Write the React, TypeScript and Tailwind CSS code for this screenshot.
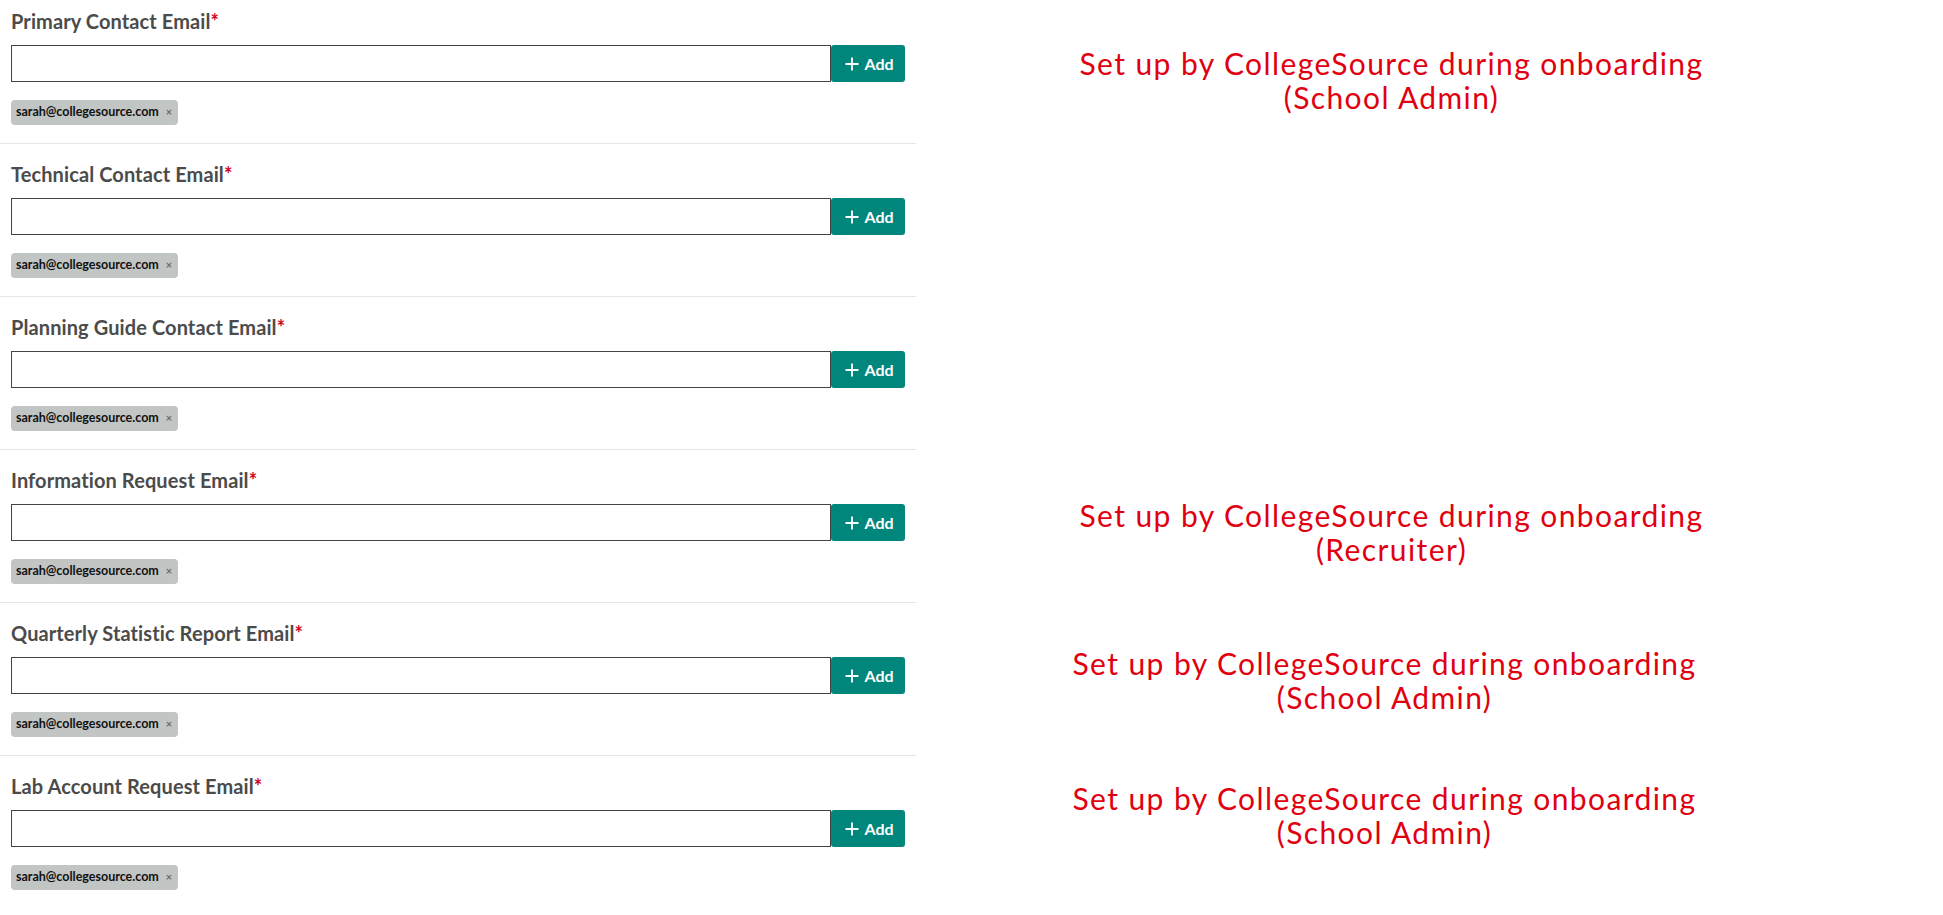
import { Plus } from 'lucide-react';

type Row = {
  label: string;
  note?: { role: string; pt: string; pr: string };
};

const rows: Row[] = [
  { label: 'Primary Contact Email', note: { role: 'School Admin', pt: 'pt-[46px]', pr: 'pr-[76px]' } },
  { label: 'Technical Contact Email' },
  { label: 'Planning Guide Contact Email' },
  { label: 'Information Request Email', note: { role: 'Recruiter', pt: 'pt-[48px]', pr: 'pr-[76px]' } },
  { label: 'Quarterly Statistic Report Email', note: { role: 'School Admin', pt: 'pt-[43px]', pr: 'pr-[90px]' } },
  { label: 'Lab Account Request Email', note: { role: 'School Admin', pt: 'pt-[25px]', pr: 'pr-[90px]' } },
];

function EmailField({ label, first, last }: { label: string; first: boolean; last: boolean }) {
  return (
    <div
      className={`w-[916px] shrink-0 px-[11px] pb-[18px] ${first ? 'pt-[10px]' : 'pt-[19px]'} ${
        last ? '' : 'border-b border-[#e6e6e6]'
      }`}
    >
      <label className="block text-[20px] leading-[23px] font-bold tracking-[0.1px] text-[#4b4b4b]">
        {label}
        <span className="text-[#d0021b]">*</span>
      </label>
      <div className="mt-[12px] flex h-[37px]">
        <input type="text" className="h-full flex-1 border border-[#444444] bg-white px-2 outline-none" />
        <button className="flex h-full w-[74px] items-center justify-center gap-[2px] rounded-[3px] bg-[#01867b] text-[16px] font-bold text-white">
          <Plus size={20} strokeWidth={2.2} />
          Add
        </button>
      </div>
      <div className="mt-[18px] flex">
        <span className="inline-flex h-[25px] items-center rounded-[4px] bg-[#c1c5c4] pl-[5px] pr-[6px] text-[12.5px] font-bold text-[#111111]">
          sarah@collegesource.com
          <span className="ml-[7px] text-[11px] font-bold text-[#6b6b6b]">×</span>
        </span>
      </div>
    </div>
  );
}

export default function App() {
  return (
    <div className="min-h-screen bg-white" style={{ fontFamily: 'Lato, "Open Sans", sans-serif' }}>
      {rows.map((row, i) => (
        <div key={row.label} className="flex">
          <EmailField label={row.label} first={i === 0} last={i === rows.length - 1} />
          <div className={`flex-1 text-center ${row.note ? `${row.note.pt} ${row.note.pr}` : ''}`}>
            {row.note && (
              <p className="text-[30px] leading-[34px] tracking-[1.4px] text-[#e00010]">
                Set up by CollegeSource during onboarding
                <br />({row.note.role})
              </p>
            )}
          </div>
        </div>
      ))}
    </div>
  );
}
